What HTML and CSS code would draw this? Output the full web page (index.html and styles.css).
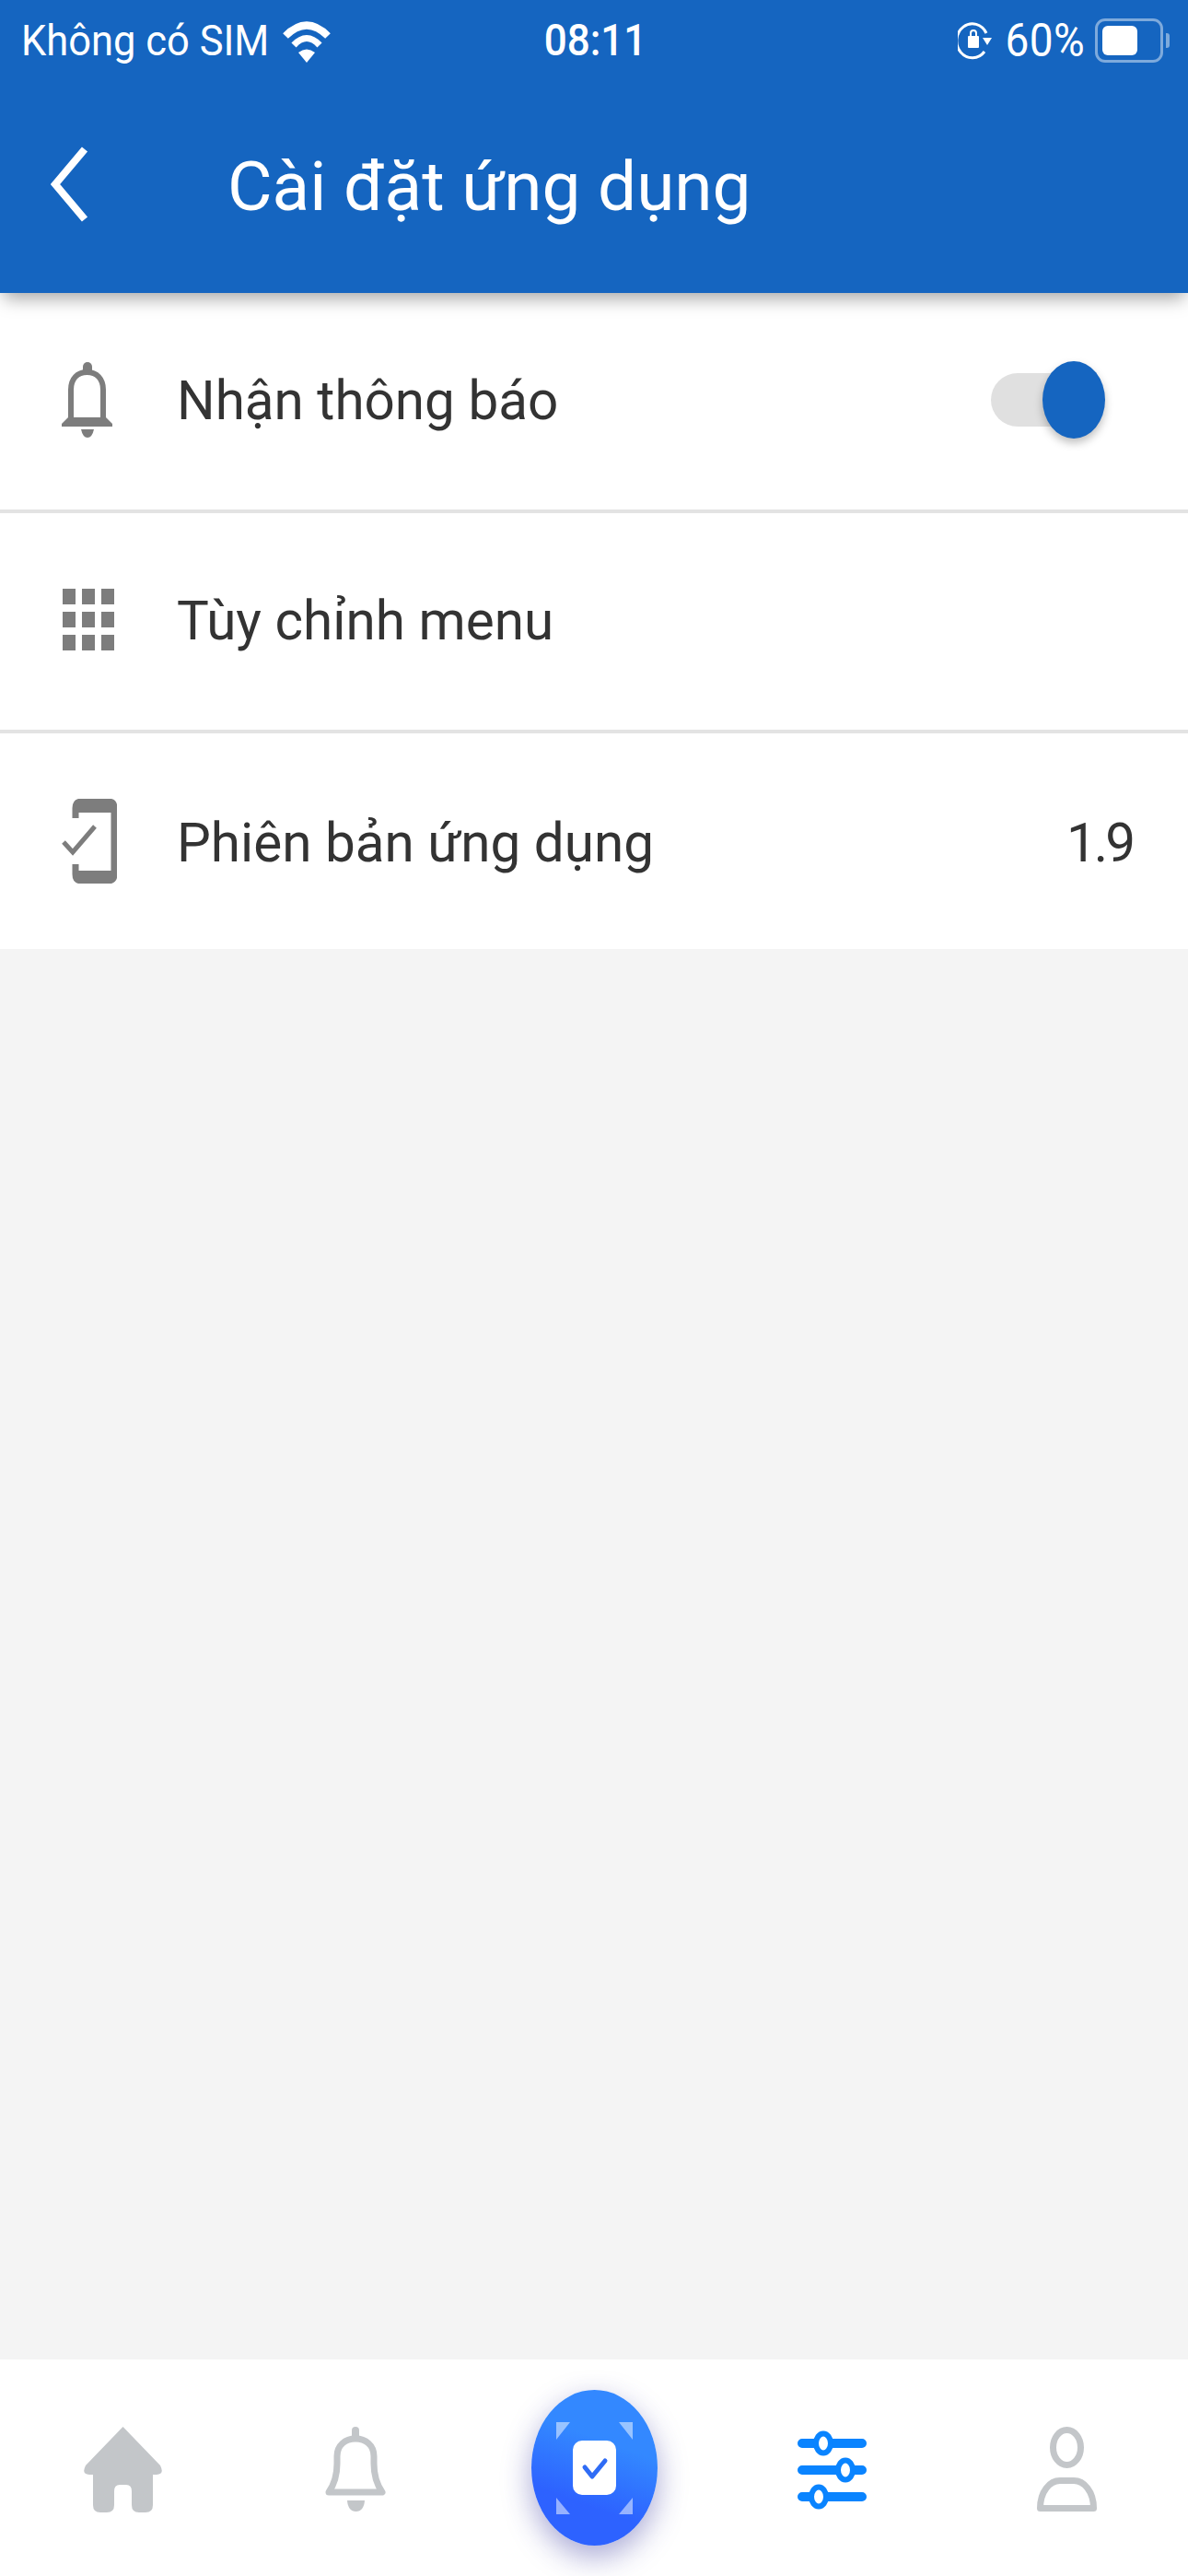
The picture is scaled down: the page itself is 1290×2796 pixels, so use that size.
FILE: index.html
```html
<!DOCTYPE html>
<html lang="vi">
<head>
  <meta charset="UTF-8">
  <meta name="viewport" content="width=device-width, initial-scale=1.0">
  <title>Cài đặt ứng dụng</title>
  <link rel="stylesheet" href="styles.css">
</head>
<body>
  <div class="app">
    <header class="header">
      <div class="status-bar">
        <div class="status-left">
          <span class="status-text">Không có SIM</span>
          <svg class="wifi" width="52" height="47" viewBox="0 0 52 47">
            <path d="M3 18 Q26 -5 49 18" fill="none" stroke="#fff" stroke-width="8"/>
            <path d="M12 28 Q26 13 40 28" fill="none" stroke="#fff" stroke-width="7"/>
            <path d="M17 36 Q26 29 35 36 L26 47 Z" fill="#fff"/>
          </svg>
        </div>
        <div class="status-time status-text">08:11</div>
        <div class="status-right">
          <svg class="rotate-lock" width="37" height="41" viewBox="0 0 37 41">
            <path d="M29 32 A17 18.5 0 1 1 31 12" fill="none" stroke="#fff" stroke-width="3"/>
            <path d="M27 17 H37 L32 25 Z" fill="#fff"/>
            <path d="M14 15 V12 Q14 9 17 9 Q20 9 20 12 V15" fill="none" stroke="#fff" stroke-width="2"/>
            <rect x="11" y="15" width="12" height="13" rx="1" fill="#fff"/>
          </svg>
          <span class="status-text status-percent">60%</span>
          <div class="battery"><div class="battery-level"></div></div>
        </div>
      </div>
      <div class="toolbar">
        <svg class="back" width="42" height="82" viewBox="0 0 42 82">
          <path d="M37 3 L5 41 L37 79" fill="none" stroke="#fff" stroke-width="8"/>
        </svg>
        <h1 class="title">Cài đặt ứng dụng</h1>
      </div>
    </header>

    <main class="settings">
      <div class="row">
        <div class="row-icon">
          <svg width="55" height="82" viewBox="0 0 55 82" fill="#7d7d7d">
            <rect x="23" y="0" width="10" height="14" rx="5"/>
            <path d="M10 63 V30 C10 18 17 11 27.5 11 C38 11 45 18 45 30 V63" fill="none" stroke="#7d7d7d" stroke-width="6"/>
            <path d="M7 60 H48 L55 67 V70 H0 V67 Z"/>
            <path d="M21 73 H35 Q33 82 28 82 Q23 82 21 73 Z"/>
          </svg>
        </div>
        <div class="row-label">Nhận thông báo</div>
        <div class="toggle"><div class="toggle-thumb"></div></div>
      </div>
      <div class="row">
        <div class="row-icon">
          <div class="apps">
            <i></i><i></i><i></i>
            <i></i><i></i><i></i>
            <i></i><i></i><i></i>
          </div>
        </div>
        <div class="row-label">Tùy chỉnh menu</div>
      </div>
      <div class="row">
        <div class="row-icon">
          <svg width="60" height="92" viewBox="0 0 60 92" fill="none" stroke="#7d7d7d">
            <path d="M15 21 V10 Q15 3 22 3 H50 Q57 3 57 10 V82 Q57 89 50 89 H22 Q15 89 15 82 V71" stroke-width="7"/>
            <path d="M15 84 H57 M15 9 H57" stroke-width="12"/>
            <path d="M2 47 L12 58 L36 30" stroke-width="5"/>
          </svg>
        </div>
        <div class="row-label">Phiên bản ứng dụng</div>
        <div class="row-value">1.9</div>
      </div>
    </main>

    <nav class="bottom-nav">
      <div class="nav-item home">
        <svg width="85" height="93" viewBox="0 0 85 93" fill="#c3c6c9">
          <path d="M42.5 0 L83 42 Q88 52 79 52 H75 V85 Q75 93 67 93 H60 Q52 93 52 85 V70 Q52 63 46 63 H39 Q33 63 33 70 V85 Q33 93 25 93 H18 Q10 93 10 85 V52 H6 Q-3 52 2 42 Z"/>
        </svg>
      </div>
      <div class="nav-item nudge">
        <svg width="66" height="92" viewBox="0 0 66 92" fill="#c3c6c9">
          <rect x="29" y="0" width="8" height="16" rx="4"/>
          <path d="M4 71 Q13 58 13 40 V32 C13 20 22 13 33 13 C44 13 53 20 53 32 V40 Q53 58 62 71 Z" fill="none" stroke="#c3c6c9" stroke-width="7" stroke-linejoin="round"/>
          <path d="M24 80 H43 Q42 92 33.5 92 Q25 92 24 80 Z"/>
        </svg>
      </div>
      <div class="nav-item">
        <div class="scan-btn">
          <svg width="137" height="169" viewBox="0 0 137 169">
            <path d="M27 35 H42 L27 54 Z M110 35 H95 L110 54 Z M27 117 L42 135 H27 Z M110 117 L95 135 H110 Z" fill="#fff" fill-opacity="0.5"/>
            <rect x="45" y="55" width="47" height="59" rx="10" fill="#fff"/>
            <path d="M58 84 L66 94 L80 77" fill="none" stroke="#2f6cf5" stroke-width="5" stroke-linecap="round" stroke-linejoin="round"/>
          </svg>
        </div>
      </div>
      <div class="nav-item">
        <svg width="75" height="87" viewBox="0 0 75 87" fill="#fff" stroke="#0a84ff">
          <path d="M5 15 H70 M5 44 H70 M5 73 H70" stroke-width="10" stroke-linecap="round"/>
          <ellipse cx="28" cy="15" rx="8" ry="10.5" stroke-width="6"/>
          <ellipse cx="52" cy="44" rx="8" ry="10.5" stroke-width="6"/>
          <ellipse cx="23" cy="73" rx="8" ry="10.5" stroke-width="6"/>
        </svg>
      </div>
      <div class="nav-item profile">
        <svg width="65" height="92" viewBox="0 0 65 92" fill="none" stroke="#c3c6c9" stroke-width="7" stroke-linejoin="round">
          <ellipse cx="32.5" cy="22.5" rx="15" ry="19"/>
          <path d="M3.5 88.5 C3.5 70 14 58.5 25 58.5 H40 C51 58.5 61.5 70 61.5 88.5 Z"/>
        </svg>
      </div>
    </nav>
  </div>
</body>
</html>
```

FILE: styles.css
```css
* {
  margin: 0;
  padding: 0;
  box-sizing: border-box;
}
body {
  font-family: 'Roboto', 'Liberation Sans', sans-serif;
  background: #f4f4f4;
  color: #333;
}
.app {
  width: 1290px;
  height: 2796px;
  display: flex;
  flex-direction: column;
  overflow: hidden;
}

/* Header */
.header {
  background: #1565c0;
  color: #fff;
  height: 318px;
  box-shadow: 0 10px 18px -4px rgba(0, 0, 0, 0.35);
  position: relative;
  z-index: 2;
}
.status-bar {
  height: 88px;
  display: grid;
  grid-template-columns: 1fr auto 1fr;
  align-items: center;
  padding: 0 20px 0 23px;
  font-size: 43.5px;
}
.status-text {
  display: inline-block;
  transform: scaleY(1.08);
}
.status-left {
  display: flex;
  align-items: center;
  gap: 15px;
}
.status-time {
  font-size: 44px;
  font-weight: 500;
}
.status-right {
  display: flex;
  align-items: center;
  justify-content: flex-end;
  gap: 15px;
}
.status-percent {
  font-size: 46px;
  letter-spacing: 0.4px;
}
.rotate-lock {
  margin-right: -1px;
}
.battery {
  width: 74px;
  height: 48px;
  margin-left: -4px;
  margin-right: 7px;
  padding: 5px;
  border: 3px solid rgba(255, 255, 255, 0.45);
  border-radius: 11px;
  position: relative;
}
.battery::after {
  content: '';
  position: absolute;
  right: -10px;
  top: 13px;
  width: 4px;
  height: 16px;
  background: rgba(255, 255, 255, 0.45);
  border-radius: 0 3px 3px 0;
}
.battery-level {
  width: 38px;
  height: 32px;
  background: #fff;
  border-radius: 6px;
}
.toolbar {
  height: 230px;
  display: flex;
  align-items: center;
  padding: 0 0 6px 55px;
}
.title {
  font-size: 74.7px;
  font-weight: 400;
  margin-left: 150px;
  padding-top: 5px;
}

/* Settings list */
.settings {
  background: #fff;
}
.row {
  height: 239px;
  display: flex;
  align-items: center;
  padding: 0 60px 4px 67px;
  border-bottom: 4px solid #e3e3e3;
}
.row:last-child {
  height: 234px;
  border-bottom: none;
  padding-bottom: 0;
}
.row-icon {
  width: 123px;
  flex-shrink: 0;
  display: flex;
}
.row-icon svg {
  display: block;
}
.row-label {
  flex: 1;
  font-size: 58.4px;
  padding: 3px 0 0 2px;
}
.row-value {
  font-size: 58.4px;
  letter-spacing: -3px;
  padding-top: 3px;
}
.apps {
  margin-left: 1px;
  display: grid;
  grid-template-columns: repeat(3, 14px);
  grid-auto-rows: 17px;
  gap: 8px 7px;
}
.apps i {
  background: #7d7d7d;
}
.toggle {
  width: 114px;
  height: 58px;
  margin-right: 40px;
  background: #e0e0e0;
  border-radius: 29px;
  position: relative;
}
.toggle-thumb {
  position: absolute;
  left: 56px;
  top: -13px;
  width: 68px;
  height: 84px;
  background: #1565c0;
  border-radius: 50%;
  box-shadow: 0 5px 10px rgba(0, 0, 0, 0.25);
}

/* Bottom nav */
.bottom-nav {
  margin-top: auto;
  height: 235px;
  background: #fff;
  display: grid;
  grid-template-columns: repeat(5, 1fr);
  align-items: center;
  padding-top: 3px;
}
.nav-item {
  display: flex;
  justify-content: center;
}
.nav-item svg {
  display: block;
}
.home {
  padding-left: 8px;
}
.nudge {
  padding-right: 3px;
}
.profile {
  padding-right: 6px;
}
.scan-btn {
  width: 137px;
  height: 169px;
  margin-top: -4px;
  border-radius: 50%;
  background: linear-gradient(200deg, #3388ff 35%, #2d62ff 70%);
  box-shadow: 0 12px 32px rgba(40, 40, 150, 0.4);
}
```
